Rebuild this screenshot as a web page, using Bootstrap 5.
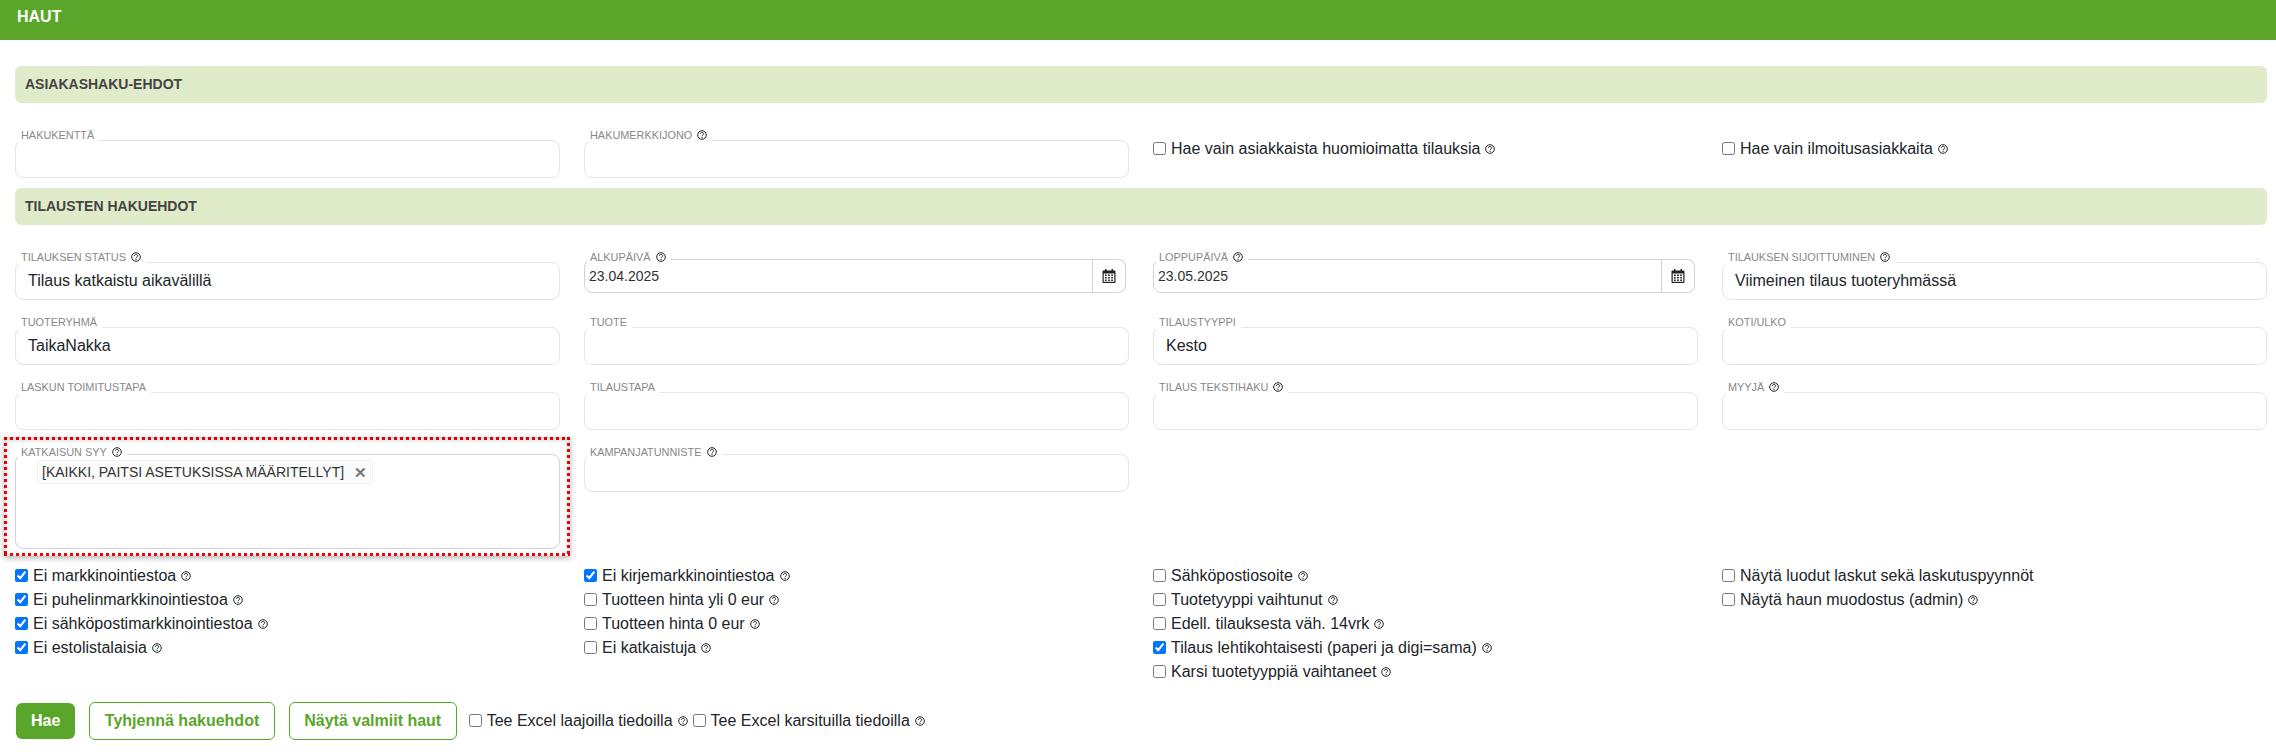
<!DOCTYPE html>
<html lang="fi">
<head>
<meta charset="utf-8">
<title>Haut</title>
<link href="https://cdn.jsdelivr.net/npm/bootstrap@5.3.0/dist/css/bootstrap.min.css" rel="stylesheet">
<style>
body{font-family:"Liberation Sans",Arial,sans-serif;font-size:16px;color:#212529;background:#fff;}
.top-bar{height:40px;background:#5aa62b;color:#fff;font-weight:700;font-size:16px;line-height:34px;padding-left:17px;}
.sec-bar{height:37px;margin:0 9px 0 15px;background:#e0ebc9;border-radius:6px;color:#444;font-weight:700;font-size:14px;line-height:37px;padding-left:10px;}
.sec-first{margin-top:26px;}
.sec-next{margin-top:10px;}
.pane{padding-left:15px;padding-right:9px;}
.row-a{margin-top:37px;}
.row-b{margin-top:27px;}
.row-c{margin-top:24px;}
.fld{position:relative;}
.fld-box.form-control{height:38px;border:1px solid #e4e4e9;border-radius:8px;padding:0 12px;font-size:16px;line-height:36px;color:#212529;box-shadow:none;}
.fld-tall.form-control{height:95px;border-color:#d3d3da;padding:5px 21px;line-height:1;}
.fld-lab{position:absolute;z-index:5;left:3px;top:-12px;background:#fff;padding:0 5px 0 3px;font-size:10.9px;line-height:14px;color:#888;text-transform:uppercase;white-space:nowrap;}
.row-c .fld-lab{top:-9px;}
.fld-date{margin-top:-3px;}
.fld-date .fld-lab{top:-9px;}
.fld-trim{margin-right:3px;}
.fld-date .form-control{height:34px;border:1px solid #d4d4d4;border-radius:8px 0 0 8px;padding:0 4px;font-size:14px;line-height:32px;color:#333;box-shadow:none;}
.fld-date .input-group-text{height:34px;width:33px;padding:0;justify-content:center;background:#fff;border:1px solid #d4d4d4;border-left:0;margin-left:0!important;border-radius:0 8px 8px 0;}
.tag-chip{display:inline-flex;align-items:center;height:24px;padding:0 5px 0 4px;font-size:14px;background:#fbfbfb;border:1px solid #f0f0f0;border-radius:3px;color:#333;white-space:nowrap;line-height:1;}
.tag-x{margin-left:10px;color:#777;font-size:15px;font-weight:700;}
.mark-zone{position:absolute;left:-11px;right:-10px;top:-17px;bottom:-7px;pointer-events:none;
background:
 linear-gradient(90deg,#f00 50%,transparent 0) repeat-x top left/6px 3px,
 linear-gradient(90deg,#f00 50%,transparent 0) repeat-x bottom left/6px 3px,
 linear-gradient(180deg,#f00 50%,transparent 0) repeat-y top left/3px 6px,
 linear-gradient(180deg,#f00 50%,transparent 0) repeat-y top right/3px 6px;
box-shadow:0 2px 6px rgba(0,0,0,.3),inset 0 2px 6px rgba(0,0,0,.25);}
.chk-wrap{margin-top:15px;}
.chk-line{display:flex;align-items:center;height:24px;white-space:nowrap;}
.chk-line input{width:13px;height:13px;margin:0 5px 1px 0;flex:none;}
.top-check{height:18px;}
.ask{width:10px;height:10px;margin-left:5px;flex:none;}
.lab-ask{width:10px;height:10px;margin-left:2px;vertical-align:-1px;}
.btn-bar{margin-top:18px;padding-left:15px;align-items:center;}
.btn-fill,.btn-line{height:38px;font-size:16px;font-weight:700;border-radius:6px;padding:0 15px;line-height:36px;}
.btn-fill{height:36px;line-height:36px;margin:0 14px 0 1px;background:#5aa62b;color:#fff;border:0;}
.btn-line{background:#fff;color:#5aa62b;border:1px solid #5aa62b;margin-right:14px;padding:0 14.500px;}
.btn-line:last-of-type{margin-right:12px;}
.btn-bar .chk-line input{margin-right:5px;}
.btn-bar .chk-line + .chk-line{margin-left:5px;}
</style>
</head>
<body>
<svg width="0" height="0" class="position-absolute">
<symbol id="help" viewBox="0 0 20 20"><circle cx="10" cy="10" r="8.6" fill="none" stroke="#222" stroke-width="2"/><path d="M6.8 8c0-2 1.4-3.2 3.3-3.2 1.900 0 3.200 1.100 3.200 2.700 0 2.500-3.200 2.600-3.200 4.700" fill="none" stroke="#222" stroke-width="2"/><rect x="9" y="13.600" width="2.200" height="2.200" fill="#222"/></symbol>
<symbol id="cal" viewBox="0 0 14 14"><path fill="#222" d="M3 0h1.500v1.500h5V0H11v1.500h1.500A1 1 0 0 1 13.500 2.500v10.500a1 1 0 0 1-1 1h-11a1 1 0 0 1-1-1V2.500a1 1 0 0 1 1-1H3z"/><path fill="#fff" d="M1.700 4.500h10.600v8.300H1.700z"/><path fill="#222" d="M3 5.500h1.700v1.500H3zM6.100 5.500h1.700v1.500H6.100zM9.200 5.500h1.700v1.500H9.200zM3 8h1.700v1.500H3zM6.100 8h1.700v1.500H6.100zM9.200 8h1.700v1.500H9.200zM3 10.500h1.700v1.500H3zM6.100 10.500h1.700v1.500H6.100zM9.200 10.500h1.700v1.500H9.200z"/></symbol>
</svg>

<div class="top-bar">HAUT</div>

<div class="sec-bar sec-first">ASIAKASHAKU-EHDOT</div>
<div class="row g-0 row-a">
  <div class="col-3 pane"><div class="fld"><span class="fld-lab">Hakukenttä</span><input class="form-control fld-box" type="text"></div></div>
  <div class="col-3 pane"><div class="fld"><span class="fld-lab">Hakumerkkijono <svg class="lab-ask"><use href="#help"/></svg></span><input class="form-control fld-box" type="text"></div></div>
  <div class="col-3 pane"><label class="chk-line top-check"><input type="checkbox">Hae vain asiakkaista huomioimatta tilauksia<svg class="ask"><use href="#help"/></svg></label></div>
  <div class="col-3 pane"><label class="chk-line top-check"><input type="checkbox">Hae vain ilmoitusasiakkaita<svg class="ask"><use href="#help"/></svg></label></div>
</div>

<div class="sec-bar sec-next">TILAUSTEN HAKUEHDOT</div>
<div class="row g-0 row-a">
  <div class="col-3 pane"><div class="fld"><span class="fld-lab">Tilauksen status <svg class="lab-ask"><use href="#help"/></svg></span><div class="form-control fld-box">Tilaus katkaistu aikavälillä</div></div></div>
  <div class="col-3 pane"><div class="fld fld-date fld-trim"><span class="fld-lab">Alkupäivä <svg class="lab-ask"><use href="#help"/></svg></span><div class="input-group"><div class="form-control">23.04.2025</div><span class="input-group-text"><svg width="14" height="14"><use href="#cal"/></svg></span></div></div></div>
  <div class="col-3 pane"><div class="fld fld-date fld-trim"><span class="fld-lab">Loppupäivä <svg class="lab-ask"><use href="#help"/></svg></span><div class="input-group"><div class="form-control">23.05.2025</div><span class="input-group-text"><svg width="14" height="14"><use href="#cal"/></svg></span></div></div></div>
  <div class="col-3 pane"><div class="fld"><span class="fld-lab">Tilauksen sijoittuminen <svg class="lab-ask"><use href="#help"/></svg></span><div class="form-control fld-box">Viimeinen tilaus tuoteryhmässä</div></div></div>
</div>
<div class="row g-0 row-b">
  <div class="col-3 pane"><div class="fld"><span class="fld-lab">Tuoteryhmä</span><div class="form-control fld-box">TaikaNakka</div></div></div>
  <div class="col-3 pane"><div class="fld"><span class="fld-lab">Tuote</span><input class="form-control fld-box" type="text"></div></div>
  <div class="col-3 pane"><div class="fld"><span class="fld-lab">Tilaustyyppi</span><div class="form-control fld-box">Kesto</div></div></div>
  <div class="col-3 pane"><div class="fld"><span class="fld-lab">Koti/ulko</span><input class="form-control fld-box" type="text"></div></div>
</div>
<div class="row g-0 row-b">
  <div class="col-3 pane"><div class="fld"><span class="fld-lab">Laskun toimitustapa</span><input class="form-control fld-box" type="text"></div></div>
  <div class="col-3 pane"><div class="fld"><span class="fld-lab">Tilaustapa</span><input class="form-control fld-box" type="text"></div></div>
  <div class="col-3 pane"><div class="fld"><span class="fld-lab">Tilaus tekstihaku <svg class="lab-ask"><use href="#help"/></svg></span><input class="form-control fld-box" type="text"></div></div>
  <div class="col-3 pane"><div class="fld"><span class="fld-lab">Myyjä <svg class="lab-ask"><use href="#help"/></svg></span><input class="form-control fld-box" type="text"></div></div>
</div>
<div class="row g-0 row-c">
  <div class="col-3 pane"><div class="fld"><span class="fld-lab">Katkaisun syy <svg class="lab-ask"><use href="#help"/></svg></span><div class="form-control fld-box fld-tall"><span class="tag-chip">[KAIKKI, PAITSI ASETUKSISSA MÄÄRITELLYT]<span class="tag-x">✕</span></span></div><div class="mark-zone"></div></div></div>
  <div class="col-3 pane"><div class="fld"><span class="fld-lab">Kampanjatunniste <svg class="lab-ask"><use href="#help"/></svg></span><input class="form-control fld-box" type="text"></div></div>
</div>

<div class="row g-0 chk-wrap">
  <div class="col-3 pane">
    <label class="chk-line"><input type="checkbox" checked>Ei markkinointiestoa<svg class="ask"><use href="#help"/></svg></label>
    <label class="chk-line"><input type="checkbox" checked>Ei puhelinmarkkinointiestoa<svg class="ask"><use href="#help"/></svg></label>
    <label class="chk-line"><input type="checkbox" checked>Ei sähköpostimarkkinointiestoa<svg class="ask"><use href="#help"/></svg></label>
    <label class="chk-line"><input type="checkbox" checked>Ei estolistalaisia<svg class="ask"><use href="#help"/></svg></label>
  </div>
  <div class="col-3 pane">
    <label class="chk-line"><input type="checkbox" checked>Ei kirjemarkkinointiestoa<svg class="ask"><use href="#help"/></svg></label>
    <label class="chk-line"><input type="checkbox">Tuotteen hinta yli 0 eur<svg class="ask"><use href="#help"/></svg></label>
    <label class="chk-line"><input type="checkbox">Tuotteen hinta 0 eur<svg class="ask"><use href="#help"/></svg></label>
    <label class="chk-line"><input type="checkbox">Ei katkaistuja<svg class="ask"><use href="#help"/></svg></label>
  </div>
  <div class="col-3 pane">
    <label class="chk-line"><input type="checkbox">Sähköpostiosoite<svg class="ask"><use href="#help"/></svg></label>
    <label class="chk-line"><input type="checkbox">Tuotetyyppi vaihtunut<svg class="ask"><use href="#help"/></svg></label>
    <label class="chk-line"><input type="checkbox">Edell. tilauksesta väh. 14vrk<svg class="ask"><use href="#help"/></svg></label>
    <label class="chk-line"><input type="checkbox" checked>Tilaus lehtikohtaisesti (paperi ja digi=sama)<svg class="ask"><use href="#help"/></svg></label>
    <label class="chk-line"><input type="checkbox">Karsi tuotetyyppiä vaihtaneet<svg class="ask"><use href="#help"/></svg></label>
  </div>
  <div class="col-3 pane">
    <label class="chk-line"><input type="checkbox">Näytä luodut laskut sekä laskutuspyynnöt</label>
    <label class="chk-line"><input type="checkbox">Näytä haun muodostus (admin)<svg class="ask"><use href="#help"/></svg></label>
  </div>
</div>

<div class="d-flex btn-bar">
  <button type="button" class="btn btn-fill">Hae</button>
  <button type="button" class="btn btn-line">Tyhjennä hakuehdot</button>
  <button type="button" class="btn btn-line">Näytä valmiit haut</button>
  <label class="chk-line"><input type="checkbox">Tee Excel laajoilla tiedoilla<svg class="ask"><use href="#help"/></svg></label>
  <label class="chk-line"><input type="checkbox">Tee Excel karsituilla tiedoilla<svg class="ask"><use href="#help"/></svg></label>
</div>

<script src="https://cdn.jsdelivr.net/npm/bootstrap@5.3.0/dist/js/bootstrap.bundle.min.js"></script>
</body>
</html>
